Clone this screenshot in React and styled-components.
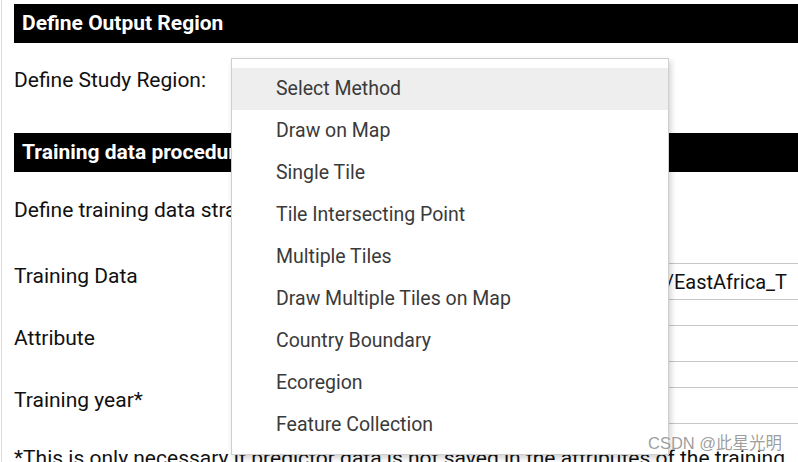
import React from "react";
import styled, { createGlobalStyle } from "styled-components";

const Global = createGlobalStyle`
  html, body { margin: 0; padding: 0; background: #fff; }
  body { font-family: Roboto, "Noto Sans", "Liberation Sans", sans-serif; overflow: hidden; }
`;

const Page = styled.div`
  position: relative;
  width: 797px;
  height: 462px;
  margin-left: 1px;
  border-left: 1px solid #dcdcdc;
  padding: 4px 0 0 12px;
  box-sizing: border-box;
  overflow: hidden;
`;

const SectionHeader = styled.div`
  height: 39px;
  line-height: 39px;
  background: #000;
  color: #fff;
  font-weight: 700;
  font-size: 21px;
  padding-left: 8px;
  white-space: nowrap;
`;

const Label = styled.div`
  font-size: 21px;
  line-height: 24px;
  color: #111;
  white-space: nowrap;
  margin-top: ${(p) => p.$top || 0}px;
  margin-bottom: ${(p) => p.$bottom || 0}px;
`;

const FormRow = styled.div`
  display: grid;
  grid-template-columns: 1fr 380px;
  align-items: start;
  margin-top: ${(p) => p.$top || 0}px;
`;

const RowLabel = styled.div`
  font-size: 21px;
  line-height: 24px;
  color: #111;
  padding-top: 1px;
  white-space: nowrap;
`;

const Field = styled.div`
  height: 37px;
  box-sizing: border-box;
  border-top: 1px solid #c6c6c6;
  border-bottom: 1px solid #c6c6c6;
  display: flex;
  justify-content: flex-end;
  align-items: center;
  overflow: hidden;
  padding-right: 11px;
  font-size: 20px;
  color: #111;
  white-space: nowrap;
`;

const FieldText = styled.span`
  flex-shrink: 0;
`;

const Menu = styled.div`
  position: absolute;
  left: 229px;
  top: 58px;
  width: 438px;
  box-sizing: border-box;
  background: #fff;
  border: 1px solid #cfcfcf;
  box-shadow: 2px 3px 6px rgba(0, 0, 0, 0.18);
  padding: 9px 0 8px;
`;

const MenuItem = styled.div`
  height: 42px;
  line-height: 41px;
  padding-left: 44px;
  font-size: 19.5px;
  color: #3a3a3a;
  background: ${(p) => (p.$active ? "#eeeeee" : "transparent")};
  white-space: nowrap;
`;

const Watermark = styled.div`
  position: absolute;
  left: 646px;
  top: 432px;
  font-size: 16.5px;
  line-height: 22px;
  color: rgba(140, 140, 140, 0.85);
  font-family: "Liberation Sans", "Noto Sans CJK SC", sans-serif;
  text-shadow: 0 0 2px #fff;
  white-space: nowrap;
`;

const items = [
  "Select Method",
  "Draw on Map",
  "Single Tile",
  "Tile Intersecting Point",
  "Multiple Tiles",
  "Draw Multiple Tiles on Map",
  "Country Boundary",
  "Ecoregion",
  "Feature Collection",
];

export default function App() {
  return (
    <>
      <Global />
      <Page>
        <SectionHeader>Define Output Region</SectionHeader>
        <Label $top={25} $bottom={41}>Define Study Region:</Label>
        <SectionHeader>Training data procedure</SectionHeader>
        <Label $top={26}>Define training data strategy:</Label>
        <FormRow $top={41}>
          <RowLabel>Training Data</RowLabel>
          <Field>
            <FieldText>users/training/c/EastAfrica_T</FieldText>
          </Field>
        </FormRow>
        <FormRow $top={25}>
          <RowLabel>Attribute</RowLabel>
          <Field />
        </FormRow>
        <FormRow $top={25}>
          <RowLabel>Training year*</RowLabel>
          <Field />
        </FormRow>
        <Label $top={22}>
          *This is only necessary if predictor data is not saved in the attributes of the training
        </Label>
        <Menu>
          {items.map((t, i) => (
            <MenuItem key={t} $active={i === 0}>
              {t}
            </MenuItem>
          ))}
        </Menu>
        <Watermark>CSDN @此星光明</Watermark>
      </Page>
    </>
  );
}
